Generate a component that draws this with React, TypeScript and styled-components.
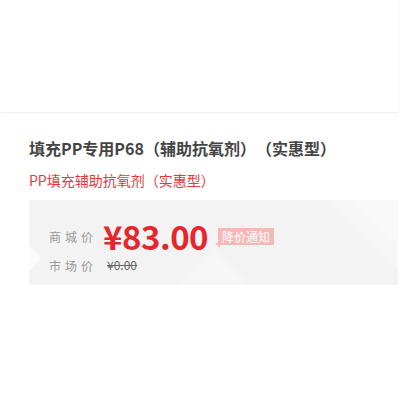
import React from 'react';
import styled, { createGlobalStyle } from 'styled-components';

const GlobalStyle = createGlobalStyle`
  body {
    margin: 0;
    background: #fff;
    font-family: "Microsoft YaHei", "Noto Sans CJK SC", "Noto Sans", sans-serif;
    text-spacing-trim: space-all;
  }
`;

const Page = styled.div`
  width: 400px;
  height: 400px;
  overflow: hidden;
`;

const TopBar = styled.div`
  width: 398px;
  height: 112px;
  background: #fff;
  box-shadow: 0 1px 2px rgba(0, 0, 0, 0.07);
`;

const Info = styled.div`
  display: flex;
  flex-direction: column;
  padding: 24px 0 0 29px;
`;

const Title = styled.h1`
  margin: 0;
  font-size: 16px;
  line-height: 24px;
  font-weight: 700;
  color: #444;
`;

const SubTitle = styled.div`
  margin-top: 10px;
  font-size: 14px;
  line-height: 20px;
  color: #e4393c;
`;

const PriceBox = styled.div`
  position: relative;
  margin-top: 10px;
  width: 369px;
  height: 85px;
  box-sizing: border-box;
  padding: 16px 0 0 20px;
  background: #f3f3f3;
  overflow: hidden;
`;

const Decor = styled.svg`
  position: absolute;
  left: 0;
  top: 0;
`;

const Row = styled.div<{ $h: number }>`
  position: relative;
  display: flex;
  align-items: center;
  height: ${(p) => p.$h}px;
`;

const Label = styled.span`
  width: 54px;
  font-size: 12px;
  letter-spacing: 4px;
  color: #999;
`;

const Price = styled.span`
  font-size: 33px;
  line-height: 1;
  font-weight: 700;
  color: #e6262b;
  letter-spacing: -0.5px;
`;

const Notice = styled.span`
  position: relative;
  margin-left: 10px;
  padding: 0 4px;
  height: 17px;
  line-height: 17px;
  font-size: 12px;
  color: #fff;
  background: #f6b7b7;
  &::after {
    content: '';
    position: absolute;
    left: -3px;
    bottom: -3px;
    border-top: 5px solid #f6b7b7;
    border-left: 5px solid transparent;
  }
`;

const Market = styled.span`
  margin-left: 4px;
  font-size: 12px;
  line-height: 1;
  color: #666;
  text-decoration: line-through;
`;

export default function App() {
  return (
    <Page>
      <GlobalStyle />
      <TopBar />
      <Info>
        <Title>填充PP专用P68（辅助抗氧剂）（实惠型）</Title>
        <SubTitle>PP填充辅助抗氧剂（实惠型）</SubTitle>
        <PriceBox>
          <Decor width="369" height="85" viewBox="0 0 369 85">
            <polygon points="0,45 12,58 0,72" fill="#fbfbfb" />
            <polygon points="150,85 185,50 220,85" fill="#f6f6f6" />
            <polygon points="300,0 369,0 369,70" fill="#f6f6f6" />
            <polygon points="320,0 369,50 369,0" fill="#f8f8f8" />
          </Decor>
          <Row $h={40}>
            <Label>商城价</Label>
            <Price>¥83.00</Price>
            <Notice>降价通知</Notice>
          </Row>
          <Row $h={18}>
            <Label>市场价</Label>
            <Market>¥0.00</Market>
          </Row>
        </PriceBox>
      </Info>
    </Page>
  );
}
